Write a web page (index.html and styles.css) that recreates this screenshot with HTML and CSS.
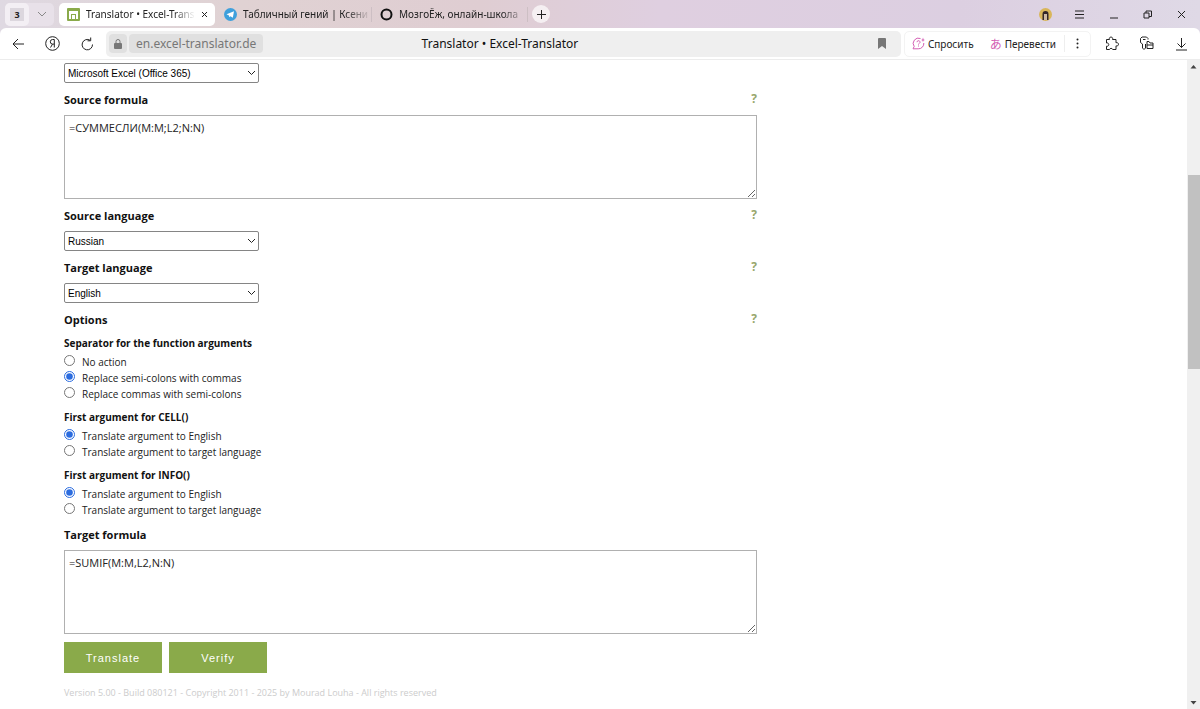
FILE: index.html
```html
<!DOCTYPE html>
<html lang="en">

<head>
    <meta charset="UTF-8">
    <meta name="viewport" content="width=device-width, initial-scale=1.0">
    <title>Translator • Excel-Translator</title>
    <link rel="stylesheet" href="styles.css">
</head>

<body>
    <header class="browser">
        <div class="tabs">
            <div class="tab-group">
                <button class="tab-count">3</button>
                <button class="tab-more" aria-label="Tab list">
                    <svg width="10" height="6" viewBox="0 0 10 6"><path d="M1 1l4 4 4-4" /></svg>
                </button>
            </div>

            <div class="tab active">
                <svg class="favicon" width="13" height="13" viewBox="0 0 13 13">
                    <rect width="13" height="13" rx="1" fill="#8aaa4a" />
                    <path d="M2 3h9v8H9V6H4v5H2z" fill="#fff" />
                    <path d="M5 7h3v4H5z" fill="#fff" />
                </svg>
                <a href="#" class="tab-name">Translator • Excel-Trans</a>
                <button class="tab-close" aria-label="Close tab">
                    <svg width="7" height="7" viewBox="0 0 7 7"><path d="M1 1l5 5M6 1L1 6" /></svg>
                </button>
            </div>

            <div class="tab">
                <svg class="favicon" width="13" height="13" viewBox="0 0 13 13">
                    <circle cx="6.5" cy="6.5" r="6.5" fill="#3fa0dc" />
                    <path d="M2.5 6.3L10 3.3 8.8 9.8 6.5 8.2 5.3 9.3 5 7.4z" fill="#fff" />
                </svg>
                <a href="#" class="tab-name">Табличный гений | Ксени</a>
            </div>

            <div class="tab">
                <svg class="favicon" width="13" height="13" viewBox="0 0 13 13">
                    <circle cx="6.5" cy="6.5" r="5" fill="none" stroke="#111" stroke-width="2" />
                </svg>
                <a href="#" class="tab-name">МозгоЁж, онлайн-школа</a>
            </div>

            <button class="tab-new" aria-label="New tab">
                <svg width="9" height="9" viewBox="0 0 9 9"><path d="M4.5 0v9M0 4.5h9" /></svg>
            </button>

            <div class="window-buttons">
                <button aria-label="Profile">
                    <svg width="13" height="13" viewBox="0 0 13 13">
                        <circle cx="6.5" cy="6.5" r="6.5" fill="#d9b65a" stroke="none" />
                        <path d="M3.5 12V6a3 3 0 0 1 6 0v6H8V6H5v6z" fill="#33262a" stroke="none" />
                        <path d="M5 6h3v6H5z" fill="#cdb9a4" stroke="none" />
                    </svg>
                </button>
                <button aria-label="Menu">
                    <svg width="9" height="9" viewBox="0 0 9 9"><path d="M0 1h9M0 4.5h9M0 8h9" /></svg>
                </button>
                <button aria-label="Minimize">
                    <svg width="9" height="9" viewBox="0 0 9 9"><path d="M1 8h8" /></svg>
                </button>
                <button aria-label="Restore">
                    <svg width="9" height="9" viewBox="0 0 9 9"><path d="M1 3h5v5H1zM3 3V1h5.5v5.5H6" /></svg>
                </button>
                <button aria-label="Close">
                    <svg width="9" height="9" viewBox="0 0 9 9"><path d="M1 1l7 7M8 1L1 8" /></svg>
                </button>
            </div>
        </div>

        <div class="toolbar">
            <div class="nav-buttons">
                <button aria-label="Back">
                    <svg width="12" height="12" viewBox="0 0 12 12"><path d="M12 6H1M6 1L1 6l5 5" /></svg>
                </button>
                <button aria-label="Home">
                    <svg width="15" height="15" viewBox="0 0 15 15">
                        <circle cx="7.5" cy="7.5" r="6.8" />
                        <path d="M9.3 11.5v-8H7.6a2.3 2.3 0 0 0 0 4.6h1.7M7.5 8.2l-2 3.3" />
                    </svg>
                </button>
                <button aria-label="Reload">
                    <svg width="13" height="14" viewBox="0 0 13 14"><path d="M11.5 7.5A5.2 5.2 0 1 1 9 3.2M6.5 3.8h3.2V.5" /></svg>
                </button>
            </div>

            <div class="address">
                <div class="site">
                    <span class="lock">
                        <svg width="8" height="10" viewBox="0 0 8 10">
                            <rect y="4" width="8" height="6" rx="1" fill="#777" />
                            <path d="M2 4V2.5a2 2 0 0 1 4 0V4" fill="none" stroke="#777" />
                        </svg>
                    </span>
                    <a href="#" class="domain">en.excel-translator.de</a>
                </div>
                <span class="page-title">Translator • Excel-Translator</span>
                <button class="bookmark" aria-label="Bookmark">
                    <svg width="8" height="11" viewBox="0 0 8 11"><path d="M0 1q0-1 1-1h6q1 0 1 1v10L4 8l-4 3z" /></svg>
                </button>
            </div>

            <div class="assistant">
                <button class="ask">
                    <svg width="13" height="13" viewBox="0 0 13 13">
                        <path d="M8.5 1.5A5.300 5.300 0 0 0 2.200 9.500L1 11.800h5.200A5.300 5.300 0 0 0 11.800 6" />
                        <path d="M5 5.200a1.500 1.500 0 1 1 2.200 1.300q-.7.4-.7 1M6.500 8.500v1" />
                        <path d="M11 .5l.6 1.900 1.400.6-1.400.6L11 5l-.6-1.400L9 3l1.400-.6z" class="spark" />
                    </svg>
                    Спросить
                </button>
                <button class="translate-page">
                    <span class="kana">あ</span>
                    Перевести
                </button>
                <button class="dots" aria-label="More">
                    <svg width="3" height="11" viewBox="0 0 3 11">
                        <circle cx="1.5" cy="1.5" r="1" /><circle cx="1.5" cy="5.5" r="1" /><circle cx="1.5" cy="9.5" r="1" />
                    </svg>
                </button>
            </div>

            <div class="extensions">
                <button aria-label="Extensions">
                    <svg width="15" height="15" viewBox="0 0 15 15">
                        <path d="M2.500 3.500H5.500a1.700 1.700 0 1 1 3 0H12v3.300a1.700 1.700 0 1 1 0 3V13.500H8.700a1.700 1.700 0 0 0-3.200 0H2.500V10.200a1.700 1.700 0 1 0 0-3.200z" />
                    </svg>
                </button>
                <button aria-label="Passwords">
                    <svg width="15" height="15" viewBox="0 0 15 15">
                        <path d="M6.500 8v4L5 13.500 3.500 12V8L1.500 6.500v-4L3 1h4.500L9 2.500v1M4 3.500h2.500" />
                        <path d="M8 12.500v-7h2l1 1.500h3v5.500zM8 9h6" />
                    </svg>
                </button>
                <button aria-label="Downloads">
                    <svg width="11" height="14" viewBox="0 0 11 14"><path d="M5.5 1v9.500M1.5 6.500l4 4 4-4M0 13h11" /></svg>
                </button>
            </div>
        </div>
    </header>

    <div class="view">
        <main>
            <form class="translator">
                <select class="version" aria-label="Excel version">
                    <option>Microsoft Excel (Office 365)</option>
                </select>

                <div class="heading">
                    <label for="source">Source formula</label>
                    <a href="#" class="help">?</a>
                </div>
                <textarea id="source" spellcheck="false">=СУММЕСЛИ(M:M;L2;N:N)</textarea>

                <div class="heading">
                    <label for="source-language">Source language</label>
                    <a href="#" class="help">?</a>
                </div>
                <select id="source-language">
                    <option>Russian</option>
                </select>

                <div class="heading">
                    <label for="target-language">Target language</label>
                    <a href="#" class="help">?</a>
                </div>
                <select id="target-language">
                    <option>English</option>
                </select>

                <div class="heading">
                    <h3>Options</h3>
                    <a href="#" class="help">?</a>
                </div>

                <fieldset>
                    <legend>Separator for the function arguments</legend>
                    <label><input type="radio" name="separator"> No action</label>
                    <label><input type="radio" name="separator" checked> Replace semi-colons with commas</label>
                    <label><input type="radio" name="separator"> Replace commas with semi-colons</label>
                </fieldset>

                <fieldset>
                    <legend>First argument for CELL()</legend>
                    <label><input type="radio" name="cell" checked> Translate argument to English</label>
                    <label><input type="radio" name="cell"> Translate argument to target language</label>
                </fieldset>

                <fieldset>
                    <legend>First argument for INFO()</legend>
                    <label><input type="radio" name="info" checked> Translate argument to English</label>
                    <label><input type="radio" name="info"> Translate argument to target language</label>
                </fieldset>

                <div class="heading">
                    <label for="target">Target formula</label>
                </div>
                <textarea id="target" spellcheck="false">=SUMIF(M:M,L2,N:N)</textarea>

                <div class="actions">
                    <button type="button">Translate</button>
                    <button type="button">Verify</button>
                </div>
            </form>

            <footer>Version 5.00 - Build 080121 - Copyright 2011 - 2025 by Mourad Louha - All rights reserved</footer>
        </main>

        <div class="scrollbar" aria-hidden="true">
            <svg width="13" height="13" viewBox="0 0 13 13"><path d="M3.5 8.500l3-3.500 3 3.500z" /></svg>
            <div class="before"></div>
            <div class="thumb"></div>
            <div class="after"></div>
            <svg width="13" height="13" viewBox="0 0 13 13"><path d="M3.5 5l3 3.500 3-3.500z" /></svg>
        </div>
    </div>
</body>

</html>
```

FILE: styles.css
```css
* {
    margin: 0;
    padding: 0;
    box-sizing: border-box;
}

body {
    display: flex;
    flex-direction: column;
    min-height: 100vh;
    font-family: "Open Sans", "Noto Sans", sans-serif;
    font-size: 10px;
    color: #222;
    background-color: #fff;
}

a {
    color: inherit;
    text-decoration: none;
}

button {
    border: none;
    background: none;
    font: inherit;
    color: inherit;
    cursor: pointer;
}

svg {
    display: block;
    flex-shrink: 0;
}

/* Browser */
.browser {
    background: linear-gradient(90deg, #dfd9e2 0, #e0d2d3 20%, #dfcdd2 40%, #dfcfe0 55%, #dccfe1 80%, #dfd9e6 100%);
    font-family: "Noto Sans", sans-serif;
    color: #222;
}

.browser button svg {
    fill: none;
    stroke: #222;
}

.tabs {
    display: flex;
    align-items: center;
    height: 28px;
    padding-left: 5px;
}

.tab-group {
    display: flex;
    align-items: center;
    width: 49px;
    height: 23px;
    margin-right: 5px;
    border-radius: 5px;
    background-color: #e8e1e9;
}

.tab-count {
    width: 24px;
    height: 23px;
    border: 5px solid #f3eff4;
    border-radius: 5px;
    background-color: #dcd7de;
    font-size: 9px;
    line-height: 13px;
    font-weight: bold;
}

.tab-more {
    flex: 1;
    display: flex;
    justify-content: center;
}

.browser .tab-more svg {
    stroke: #888;
}

.tab {
    display: flex;
    align-items: center;
    gap: 6px;
    width: 156px;
    height: 23px;
    padding: 0 1px 0 8px;
}

.tab + .tab {
    position: relative;
}

.tab:not(.active)::after {
    content: "";
    position: absolute;
    right: 0;
    top: 4px;
    width: 1px;
    height: 15px;
    background-color: #cdbfc4;
}

.tab.active {
    padding-right: 10px;
    border-radius: 5px;
    background-color: #fff;
    margin-right: 1px;
}

.tab-name {
    flex: 1;
    white-space: nowrap;
    font-size: 10px;
    line-height: 16px;
    -webkit-mask-image: linear-gradient(90deg, #000 80%, transparent);
    mask-image: linear-gradient(90deg, #000 80%, transparent);
}

.tab-new {
    display: flex;
    align-items: center;
    justify-content: center;
    width: 18px;
    height: 18px;
    margin-left: 4px;
    border-radius: 50%;
    background-color: #f5eff2;
}

.window-buttons {
    display: flex;
    margin-left: auto;
    padding-right: 2px;
}

.window-buttons button {
    display: flex;
    align-items: center;
    justify-content: center;
    width: 34px;
    height: 28px;
}

.toolbar {
    display: flex;
    align-items: center;
    height: 32px;
    border-bottom: 1px solid #ececec;
    border-radius: 6px 6px 0 0;
    background-color: #fff;
}

.nav-buttons,
.extensions {
    display: flex;
}

.nav-buttons {
    padding-right: 1px;
}

.extensions {
    padding: 0 1px 0 3px;
}

.nav-buttons button,
.extensions button {
    display: flex;
    align-items: center;
    justify-content: center;
    width: 35px;
    height: 28px;
}

.address {
    flex: 1;
    display: grid;
    grid-template-columns: 1fr auto 1fr;
    align-items: center;
    height: 26px;
    padding: 0 10px 0 3px;
    border-radius: 5px;
    background-color: #efefef;
}

.site {
    display: flex;
    gap: 2px;
}

.lock,
.domain {
    display: flex;
    align-items: center;
    height: 19px;
    border-radius: 4px;
    background-color: #e0e0e0;
}

.lock {
    padding: 0 5px;
}

.domain {
    padding: 0 7px;
    font-size: 12px;
    color: #777;
}

.page-title {
    font-size: 12px;
    color: #111;
}

.bookmark {
    justify-self: end;
    padding-right: 5px;
}

.browser .bookmark svg {
    fill: #777;
    stroke: none;
}

.assistant {
    display: flex;
    align-items: center;
    height: 26px;
    margin-left: 3px;
    border: 1px solid #f3f3f3;
    border-radius: 5px;
    font-size: 10px;
}

.ask,
.translate-page {
    display: flex;
    align-items: center;
    gap: 3px;
    padding-left: 7px;
}

.translate-page {
    padding-left: 16px;
    padding-right: 8px;
}

.browser .ask svg {
    stroke: #d45fb4;
}

.browser .ask .spark {
    fill: #d45fb4;
    stroke: none;
}

.kana {
    width: 12px;
    font-family: "Noto Sans CJK JP", sans-serif;
    font-size: 12px;
    line-height: 16px;
    color: #d45fb4;
}

.dots {
    padding: 3px 11px;
    border-left: 1px solid #eee;
}

.browser .dots svg {
    fill: #222;
    stroke: none;
}

/* Page */
.view {
    flex: 1;
    display: flex;
}

main {
    flex: 1;
    padding: 3px 64px 8px;
}

.translator {
    max-width: 693px;
}

select {
    display: block;
    width: 195px;
    height: 20px;
    padding: 0 3px;
    border: 1px solid #858585;
    border-radius: 2px;
    background: #fff url("data:image/svg+xml,%3Csvg xmlns='http://www.w3.org/2000/svg' width='9' height='6'%3E%3Cpath d='M1 1l3.500 3.500L8 1' fill='none' stroke='%23222'/%3E%3C/svg%3E") no-repeat right 2px center;
    appearance: none;
    font-family: "Liberation Sans", Arial, sans-serif;
    font-size: 10px;
    color: #000;
}

.heading {
    display: flex;
    justify-content: space-between;
    margin: 7px 0 5px;
    font-size: 11px;
    line-height: 20px;
    font-weight: bold;
    color: #111;
}

h3 {
    font-size: 11px;
}

.help {
    font-size: 12px;
    line-height: 18px;
    color: #98a76c;
}

textarea {
    display: block;
    width: 100%;
    height: 84px;
    padding: 4px;
    border: 1px solid #b0b0b0;
    background-color: #fff;
    font-family: "Open Sans", "Noto Sans", sans-serif;
    font-size: 11px;
    line-height: 16px;
    color: #222;
}

fieldset {
    margin-bottom: 7px;
    border: none;
}

legend {
    margin-bottom: 3px;
    line-height: 16px;
    font-weight: bold;
    color: #111;
}

fieldset label {
    display: flex;
    align-items: flex-start;
    gap: 7px;
    line-height: 16px;
}

input[type="radio"] {
    width: 11px;
    height: 11px;
    margin-top: 1px;
    accent-color: #2b6cdf;
}

.actions {
    display: flex;
    gap: 7px;
    margin-top: 8px;
}

.actions button {
    width: 98px;
    height: 31px;
    background-color: #8aaa4a;
    font-family: "Liberation Sans", Arial, sans-serif;
    font-size: 11px;
    letter-spacing: 1px;
    color: #fff;
}

.actions button:hover {
    background-color: #789540;
}

footer {
    margin-top: 12px;
    font-size: 9px;
    line-height: 16px;
    color: #ccc;
}

.scrollbar {
    display: flex;
    flex-direction: column;
    width: 13px;
    background-color: #f0f0f0;
}

.scrollbar svg {
    fill: #444;
}

.before {
    flex: 102;
}

.thumb {
    flex: 194;
    margin-left: 1px;
    background-color: #c1c1c1;
}

.after {
    flex: 327;
}
```
